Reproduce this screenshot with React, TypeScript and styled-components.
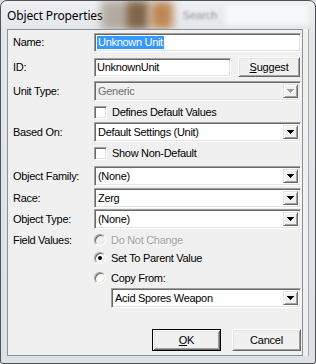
import React from "react";
import styled, { createGlobalStyle } from "styled-components";

const GlobalStyle = createGlobalStyle`
  html, body { margin: 0; padding: 0; background: #d9dde2; }
  *, *::before, *::after { box-sizing: border-box; }
`;

const Window = styled.div`
  width: 316px;
  height: 364px;
  display: flex;
  flex-direction: column;
  border: 1px solid #4f545a;
  border-radius: 7px 7px 3px 3px;
  background: linear-gradient(180deg, #eef0f2 0px, #e4e7ea 28px, #dde0e4 100%);
  overflow: hidden;
`;

const TitleBar = styled.div`
  height: 28px;
  flex: none;
  display: flex;
  align-items: center;
  padding-left: 6px;
  overflow: hidden;
`;

const TitleText = styled.span`
  flex: none;
  font-family: "Noto Sans", "Open Sans", sans-serif;
  font-size: 12px;
  letter-spacing: -0.15px;
  line-height: 16px;
  color: #000;
  margin-top: 1px;
`;

const Blob = styled.div<{ $w: number; $h: number; $ml: number; $c: string; $blur: number }>`
  flex: none;
  width: ${(p) => p.$w}px;
  height: ${(p) => p.$h}px;
  margin-left: ${(p) => p.$ml}px;
  background: ${(p) => p.$c};
  filter: blur(${(p) => p.$blur}px);
  border-radius: 4px;
`;

const GhostText = styled.span`
  flex: none;
  margin-left: 10px;
  font-family: "Liberation Sans", Arial, sans-serif;
  font-size: 11px;
  color: #8e959c;
  filter: blur(0.9px);
`;

const Body = styled.div`
  flex: 1;
  display: flex;
  padding: 0 12px 7px 6px;
`;

const Client = styled.div`
  flex: 1;
  position: relative;
  border: 1px solid #8b9198;
  background: #f0f0f0;
  padding: 0 1px 0 5px;
  display: flex;
  flex-direction: column;
  font-family: "Liberation Sans", Arial, sans-serif;
  font-size: 11px;
  letter-spacing: -0.3px;
  color: #000;

  &::after {
    content: "";
    position: absolute;
    top: -1px;
    bottom: -1px;
    right: -7px;
    width: 6px;
    border-right: 1px solid #a2a8ae;
    background: rgba(255, 255, 255, 0.45);
  }
`;

const Row = styled.div<{ $mt: number; $h: number }>`
  display: grid;
  grid-template-columns: 81px 1fr;
  height: ${(p) => p.$h}px;
  margin-top: ${(p) => p.$mt}px;
  align-items: center;
  flex: none;
`;

const Label = styled.span`
  white-space: nowrap;
  line-height: 13px;
`;

const Cell = styled.div<{ $indent?: number }>`
  grid-column: 2;
  height: 100%;
  display: flex;
  align-items: center;
  padding-left: ${(p) => p.$indent ?? 0}px;
  min-width: 0;
`;

const sunken = `
  border: 1px solid;
  border-color: #a0a0a0 #ffffff #ffffff #a0a0a0;
  box-shadow: inset 1px 1px #696969, inset -1px -1px #e3e3e3;
`;

const TextBox = styled.div<{ $w?: number; $h: number }>`
  ${sunken}
  ${(p) => (p.$w ? `width: ${p.$w}px; flex: none;` : "flex: 1;")}
  height: ${(p) => p.$h}px;
  background: #fff;
  display: flex;
  align-items: center;
  padding-left: 2px;
  white-space: nowrap;
  overflow: hidden;
`;

const Selected = styled.span`
  background: #3399ff;
  color: #fff;
  line-height: 13px;
  padding: 0 1px;
`;

const ComboBox = styled.div<{ $disabled?: boolean; $h: number }>`
  ${sunken}
  flex: 1;
  height: ${(p) => p.$h}px;
  background: ${(p) => (p.$disabled ? "#f0f0f0" : "#fff")};
  color: ${(p) => (p.$disabled ? "#6d6d6d" : "#000")};
  display: flex;
  align-items: stretch;
  padding: 2px;
`;

const ComboText = styled.span`
  flex: 1;
  display: flex;
  align-items: center;
  padding-left: 1px;
  white-space: nowrap;
  overflow: hidden;
`;

const DropButton = styled.div`
  width: 15px;
  flex: none;
  background: #f0f0f0;
  border: 1px solid;
  border-color: #e3e3e3 #696969 #696969 #e3e3e3;
  box-shadow: inset 1px 1px #fff, inset -1px -1px #a0a0a0;
  display: flex;
  align-items: center;
  justify-content: center;
`;

const CheckBox = styled.div`
  ${sunken}
  width: 13px;
  height: 13px;
  flex: none;
  background: #fff;
`;

const Radio = styled.div<{ $disabled?: boolean }>`
  width: 12px;
  height: 12px;
  flex: none;
  border-radius: 50%;
  border: 1px solid;
  border-color: #a0a0a0 #ffffff #ffffff #a0a0a0;
  box-shadow: inset 1px 1px #696969, inset -1px -1px #e3e3e3;
  background: ${(p) => (p.$disabled ? "#f0f0f0" : "#fff")};
  display: flex;
  align-items: center;
  justify-content: center;
`;

const Dot = styled.div`
  width: 4px;
  height: 4px;
  border-radius: 50%;
  background: #000;
`;

const OptionText = styled.span<{ $disabled?: boolean }>`
  margin-left: 5px;
  white-space: nowrap;
  line-height: 13px;
  color: ${(p) => (p.$disabled ? "#a0a0a0" : "#000")};
  text-shadow: ${(p) => (p.$disabled ? "1px 1px #fff" : "none")};
`;

const PushButton = styled.button<{ $default?: boolean; $w: number; $h: number; $ml?: number }>`
  flex: none;
  width: ${(p) => p.$w}px;
  height: ${(p) => p.$h}px;
  margin-left: ${(p) => p.$ml ?? 0}px;
  padding: 0;
  font-family: "Liberation Sans", Arial, sans-serif;
  font-size: 11px;
  letter-spacing: -0.2px;
  color: #000;
  background: #f0f0f0;
  border: 1px solid;
  border-color: ${(p) => (p.$default ? "#000" : "#fff #696969 #696969 #fff")};
  box-shadow: ${(p) =>
    p.$default
      ? "inset 1px 1px #fff, inset -1px -1px #696969, inset 2px 2px #e3e3e3, inset -2px -2px #a0a0a0"
      : "inset 1px 1px #e3e3e3, inset -1px -1px #a0a0a0"};
`;

const ButtonRow = styled.div<{ $mt: number }>`
  flex: none;
  display: flex;
  justify-content: flex-end;
  margin-top: ${(p) => p.$mt}px;
`;

const Arrow: React.FC<{ disabled?: boolean }> = ({ disabled }) => (
  <svg width="8" height="5" viewBox="0 0 8 5" shapeRendering="crispEdges">
    {disabled && <path d="M1 1h7v1H1z M2 2h5v1H2z M3 3h3v1H3z M4 4h1v1H4z" fill="#fff" />}
    <path d="M0 0h7v1H0z M1 1h5v1H1z M2 2h3v1H2z M3 3h1v1H3z" fill={disabled ? "#a0a0a0" : "#000"} />
  </svg>
);

const Combo: React.FC<{ text: string; disabled?: boolean; h?: number }> = ({ text, disabled, h = 20 }) => (
  <ComboBox $disabled={disabled} $h={h}>
    <ComboText>{text}</ComboText>
    <DropButton>
      <Arrow disabled={disabled} />
    </DropButton>
  </ComboBox>
);

export default function App() {
  return (
    <>
      <GlobalStyle />
      <Window>
        <TitleBar>
          <TitleText>Object Properties</TitleText>
          <Blob $w={24} $h={30} $ml={-2} $c="rgba(135,118,98,0.55)" $blur={4} />
          <Blob $w={24} $h={30} $ml={0} $c="rgba(104,68,34,0.8)" $blur={4} />
          <Blob $w={22} $h={28} $ml={2} $c="rgba(178,110,44,0.8)" $blur={4} />
          <GhostText>Search</GhostText>
          <Blob $w={84} $h={20} $ml={8} $c="rgba(255,255,255,0.6)" $blur={2} />
        </TitleBar>
        <Body>
          <Client>
            <Row $mt={3} $h={19}>
              <Label>Name:</Label>
              <Cell>
                <TextBox $h={19}>
                  <Selected>Unknown Unit</Selected>
                </TextBox>
              </Cell>
            </Row>
            <Row $mt={5} $h={20}>
              <Label>ID:</Label>
              <Cell>
                <TextBox $w={137} $h={19}>UnknownUnit</TextBox>
                <PushButton $w={62} $h={20} $ml={7}>
                  <u>S</u>uggest
                </PushButton>
              </Cell>
            </Row>
            <Row $mt={4} $h={20}>
              <Label>Unit Type:</Label>
              <Cell>
                <Combo text="Generic" disabled />
              </Cell>
            </Row>
            <Row $mt={3} $h={16}>
              <Cell>
                <CheckBox />
                <OptionText>Defines Default Values</OptionText>
              </Cell>
            </Row>
            <Row $mt={2} $h={20}>
              <Label>Based On:</Label>
              <Cell>
                <Combo text="Default Settings (Unit)" />
              </Cell>
            </Row>
            <Row $mt={4} $h={15}>
              <Cell>
                <CheckBox />
                <OptionText>Show Non-Default</OptionText>
              </Cell>
            </Row>
            <Row $mt={5} $h={20}>
              <Label>Object Family:</Label>
              <Cell>
                <Combo text="(None)" />
              </Cell>
            </Row>
            <Row $mt={2} $h={20}>
              <Label>Race:</Label>
              <Cell>
                <Combo text="Zerg" />
              </Cell>
            </Row>
            <Row $mt={1} $h={20}>
              <Label>Object Type:</Label>
              <Cell>
                <Combo text="(None)" />
              </Cell>
            </Row>
            <Row $mt={3} $h={16}>
              <Label>Field Values:</Label>
              <Cell>
                <Radio $disabled />
                <OptionText $disabled>Do Not Change</OptionText>
              </Cell>
            </Row>
            <Row $mt={2} $h={16}>
              <Cell>
                <Radio>
                  <Dot />
                </Radio>
                <OptionText>Set To Parent Value</OptionText>
              </Cell>
            </Row>
            <Row $mt={4} $h={16}>
              <Cell>
                <Radio />
                <OptionText>Copy From:</OptionText>
              </Cell>
            </Row>
            <Row $mt={2} $h={20}>
              <Cell $indent={17}>
                <Combo text="Acid Spores Weapon" />
              </Cell>
            </Row>
            <ButtonRow $mt={21}>
              <PushButton $default $w={69} $h={22}>
                <u>O</u>K
              </PushButton>
              <PushButton $w={69} $h={22} $ml={11}>
                Cancel
              </PushButton>
            </ButtonRow>
          </Client>
        </Body>
      </Window>
    </>
  );
}
